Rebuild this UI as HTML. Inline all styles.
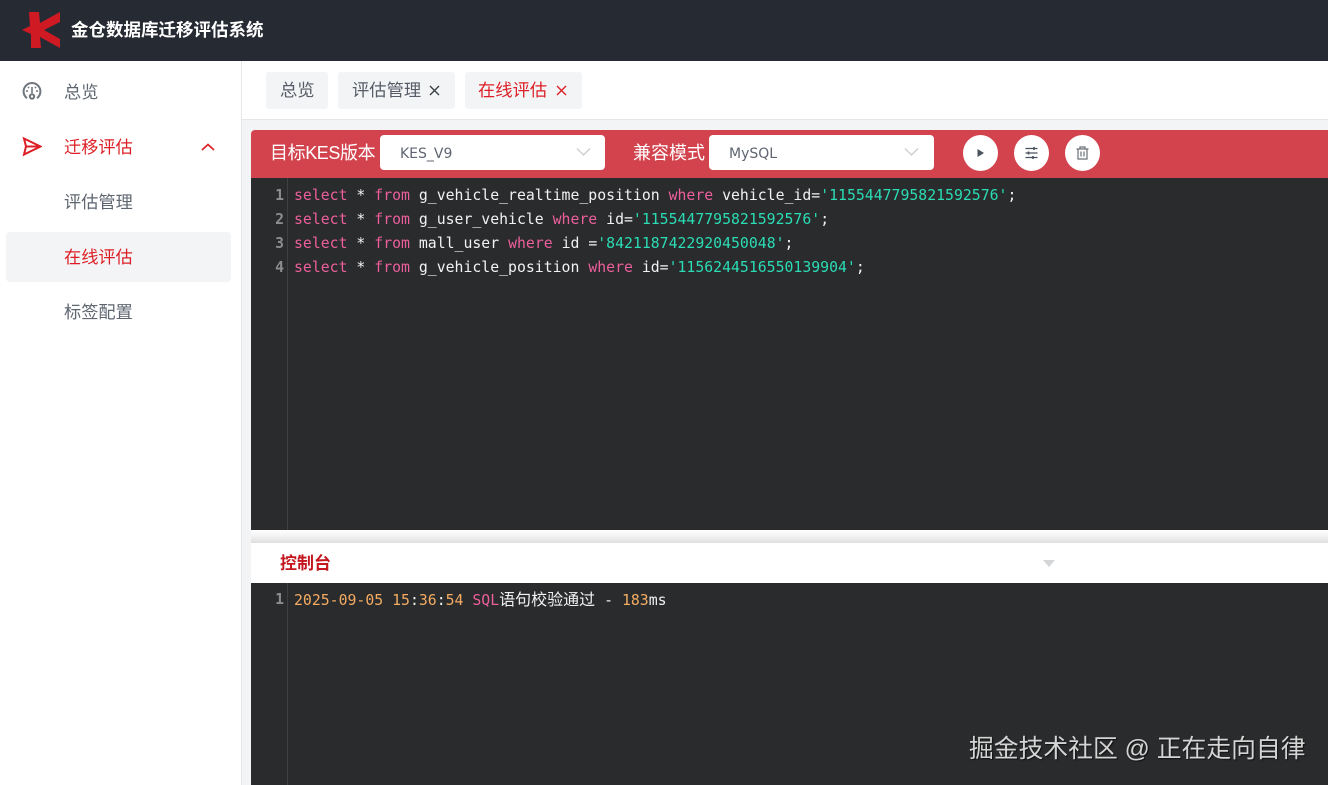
<!DOCTYPE html>
<html lang="zh"><head><meta charset="utf-8"><title>金仓数据库迁移评估系统</title>
<style>
*{box-sizing:border-box}
html,body{margin:0;padding:0;width:1328px;height:785px;overflow:hidden;background:#fff;font-family:"Liberation Sans","Noto Sans CJK SC",sans-serif}
.a{position:absolute;white-space:nowrap}
.m{font-size:17.2px;line-height:24px;color:#5f6670}
.r{color:#dc1f26}
.tab{background:#f3f4f6;border-radius:3px;top:72px;height:37px;line-height:36px;font-size:17.3px;color:#565d66;padding-left:14px}
.sel{background:#fff;border-radius:4px;top:135px;height:35px;width:225px;line-height:38px;padding-left:20px;color:#5f6670;font-family:"DejaVu Sans","Liberation Sans",sans-serif;font-size:14px}
.btn{width:35px;height:36px;border-radius:50%;background:#fff;top:135px}
.code{font-family:"DejaVu Sans Mono","Noto Sans CJK SC",monospace;font-size:14.82px;line-height:24.3px;color:#f1f2f2}
.ln{font-family:"DejaVu Sans Mono",monospace;font-size:14.8px;line-height:24.3px;color:#8b8d8e;text-align:right;width:33px;font-weight:700}
.k{color:#ec5f9b}.s{color:#2bdcb4}.n{color:#f5ac62}
.z{font-size:16px}
</style></head><body>
<div class="a" style="left:0;top:0;width:1328px;height:61px;background:#262a33"></div>
<svg class="a" style="left:0;top:0" width="70" height="60" viewBox="0 0 70 60"><path fill="#cf1a24" d="M22 30 30 26 29 12 39 12 40 23 60 12 60 22 44 30 60 39 60 48 40 37 41 48 31 48 31 34Z"/></svg>
<div class="a" style="left:71px;top:17px;font-size:17.5px;line-height:26px;font-weight:700;color:#fff">金仓数据库迁移评估系统</div>

<div class="a" style="left:241px;top:61px;width:1px;height:724px;background:#e6e7e9"></div>
<div class="a" style="left:242px;top:61px;width:1086px;height:724px;background:#f3f4f6"></div>
<div class="a" style="left:242px;top:61px;width:1086px;height:59px;background:#fff;border-bottom:1px solid #e4e5e7"></div>

<svg class="a" style="left:22px;top:81px" width="20" height="20" viewBox="0 0 20 20" fill="none" stroke="#70767e" stroke-width="2"><path d="M5 17.200A8.400 8.400 0 1 1 15 17.200"/><path d="M10 6v6M4 10h2M14 10h2M6 6l1 1M14 6l-1 1" stroke-width="1.600"/><circle cx="10" cy="15.500" r="2.200"/></svg>
<div class="a m" style="left:64px;top:80px">总览</div>
<svg class="a" style="left:22px;top:136px" width="20" height="21" viewBox="0 0 20 21" fill="none" stroke="#dc1f26" stroke-width="2"><path d="M2 2.500 18.500 10.500 2 18.500 4 10.500ZM4 10.500H18"/></svg>
<div class="a m r" style="left:64px;top:135px">迁移评估</div>
<svg class="a" style="left:200px;top:142px" width="16" height="10" viewBox="0 0 16 10" fill="none" stroke="#dc1f26" stroke-width="1.700"><path d="M2 8 8 2.500 14 8"/></svg>
<div class="a m" style="left:64px;top:190px">评估管理</div>
<div class="a" style="left:6px;top:232px;width:225px;height:50px;background:#f3f4f6;border-radius:4px"></div>
<div class="a m r" style="left:64px;top:245px">在线评估</div>
<div class="a m" style="left:64px;top:300px">标签配置</div>

<div class="a tab" style="left:266px;width:62px">总览</div>
<div class="a tab" style="left:338px;width:117px">评估管理</div>
<svg class="a" style="left:429px;top:85px" width="11" height="11" viewBox="0 0 11 11" stroke="#3a3f46" stroke-width="1.400"><path d="M1 1 10 10M10 1 1 10"/></svg>
<div class="a tab r" style="left:465px;width:117px;padding-left:13px;color:#dc1f26">在线评估</div>
<svg class="a" style="left:556px;top:85px" width="11" height="11" viewBox="0 0 11 11" stroke="#dc1f26" stroke-width="1.400"><path d="M1 1 10 10M10 1 1 10"/></svg>

<div class="a" style="left:251px;top:130px;width:1077px;height:48px;background:#d2434e;border-radius:4px 0 0 0"></div>
<div class="a" style="left:270px;top:140px;font-size:18px;line-height:26px;color:#fff;letter-spacing:-.4px">目标KES版本</div>
<div class="a sel" style="left:380px">KES_V9</div>
<svg class="a" style="left:576px;top:147px" width="15" height="10" viewBox="0 0 15 10" fill="none" stroke="#c9ccd1" stroke-width="1.300"><path d="M1 1.500 7.500 8 14 1.500"/></svg>
<div class="a" style="left:633px;top:140px;font-size:18px;line-height:26px;color:#fff">兼容模式</div>
<div class="a sel" style="left:709px">MySQL</div>
<svg class="a" style="left:904px;top:147px" width="15" height="10" viewBox="0 0 15 10" fill="none" stroke="#c9ccd1" stroke-width="1.300"><path d="M1 1.500 7.500 8 14 1.500"/></svg>
<div class="a btn" style="left:963px"></div>
<svg class="a" style="left:963px;top:135px" width="35" height="36" viewBox="0 0 35 36"><path fill="#4a525c" d="M14.500 14 21 18 14.500 22Z"/></svg>
<div class="a btn" style="left:1014px"></div>
<svg class="a" style="left:1014px;top:135px" width="35" height="36" viewBox="0 0 35 36" stroke="#4a525c" stroke-width="1.200" fill="none"><path d="M11.500 13.500H23.500M11.500 18H23.500M11.500 22.500H23.500"/><path d="M20 12V15M14.500 16.500V19.500M19 21V24" stroke-width="1.600"/></svg>
<div class="a btn" style="left:1065px"></div>
<svg class="a" style="left:1065px;top:135px" width="35" height="36" viewBox="0 0 35 36" stroke="#6a7078" stroke-width="1.200" fill="none"><path d="M11.500 14H23.500M15 14V12H20V14M13 14V24H22V14M16 16.500V21.500M19 16.500V21.500"/></svg>

<div class="a" style="left:251px;top:178px;width:1077px;height:352px;background:#292b2d"></div>
<div class="a" style="left:287px;top:178px;width:1px;height:352px;background:#3e4042"></div>
<div class="a ln" style="left:251px;top:183.6px">1<br>2<br>3<br>4</div>
<div class="a code" style="left:294px;top:183.6px"><span class="k">select</span> * <span class="k">from</span> g_vehicle_realtime_position <span class="k">where</span> vehicle_id=<span class="s">'1155447795821592576'</span>;<br><span class="k">select</span> * <span class="k">from</span> g_user_vehicle <span class="k">where</span> id=<span class="s">'1155447795821592576'</span>;<br><span class="k">select</span> * <span class="k">from</span> mall_user <span class="k">where</span> id =<span class="s">'8421187422920450048'</span>;<br><span class="k">select</span> * <span class="k">from</span> g_vehicle_position <span class="k">where</span> id=<span class="s">'1156244516550139904'</span>;</div>

<div class="a" style="left:251px;top:530px;width:1077px;height:13px;background:linear-gradient(#fff 0,#f6f6f6 35%,#dfdfdf 100%)"></div>
<div class="a" style="left:251px;top:543px;width:1077px;height:40px;background:#fff"></div>
<div class="a" style="left:280px;top:551px;font-size:17px;line-height:26px;font-weight:700;color:#c4161f">控制台</div>
<div class="a" style="left:1043px;top:560px;width:0;height:0;border-left:6px solid transparent;border-right:6px solid transparent;border-top:7px solid #d4d5d7"></div>

<div class="a" style="left:251px;top:583px;width:1077px;height:202px;background:#292b2d"></div>
<div class="a" style="left:287px;top:583px;width:1px;height:202px;background:#3e4042"></div>
<div class="a ln" style="left:251px;top:588px">1</div>
<div class="a code" style="left:294px;top:588px"><span class="n">2025-09-05 15</span>:<span class="n">36</span>:<span class="n">54</span> <span class="k">SQL</span><span class="z">语句校验通过</span> - <span class="n">183</span>ms</div>

<div class="a" style="left:969px;top:733px;font-size:24.8px;line-height:34px;color:#d4d4d4;text-shadow:1px 1px 1px #111">掘金技术社区 @ 正在走向自律</div>
</body></html>
